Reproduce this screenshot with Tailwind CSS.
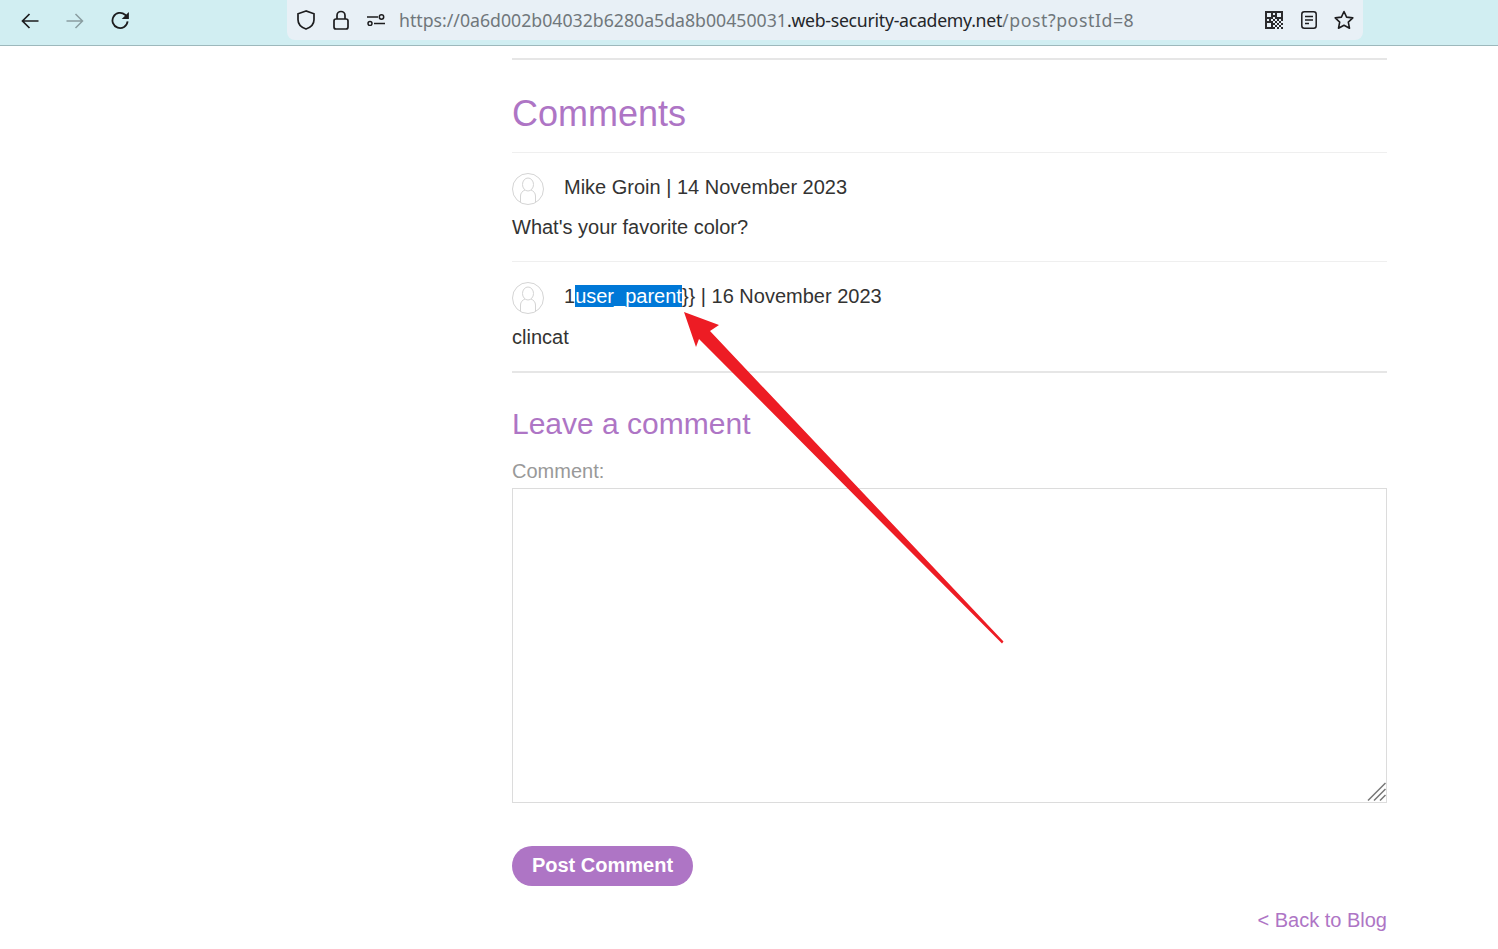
<!DOCTYPE html>
<html lang="en">
<head>
    <meta charset="UTF-8">
    <title>Comments</title>
    <script src="https://cdn.jsdelivr.net/npm/@tailwindcss/browser@4"></script>
</head>
<body class="relative h-[949px] overflow-hidden bg-white font-['Liberation_Sans',Arial,sans-serif] text-[20px] text-[#333332]">
    <!-- Browser toolbar -->
    <header class="flex h-[46px] border-b border-[#9db8bc] bg-[#d1eef2]">
        <div class="flex h-[41px] w-[287px] items-center gap-[27px] pl-[21px]">
            <svg class="h-[18px] w-[18px]" viewBox="0 0 18 18" fill="none" stroke="#1c1c1e" stroke-width="1.7"><path d="M17.5 9H1.5M8.5 2 1.5 9l7 7"/></svg>
            <svg class="h-[18px] w-[18px]" viewBox="0 0 18 18" fill="none" stroke="#8a9da1" stroke-width="1.5"><path d="M.5 9h16M9.5 2l7 7-7 7"/></svg>
            <svg class="h-[19px] w-[19px]" viewBox="0 0 20 20" fill="none" stroke="#1c1c1e" stroke-width="1.9"><path d="M17.500 11A8 8 0 1 1 14.800 3.900L17 6.500"/><path d="M18.800 1v7.500h-7.500z" fill="#1c1c1e" stroke="none"/></svg>
        </div>
        <div class="flex h-[40px] w-[1076px] items-center rounded-b-lg bg-[#e8f0f6] pl-[10px]">
            <svg class="h-[20px] w-[18px]" viewBox="0 0 18 20" fill="none" stroke="#1c1c1e" stroke-width="1.7"><path d="M9 1 1 3.8v6c0 4.2 3.2 7.6 8 9.2 4.800-1.600 8-5 8-9.200v-6z"/></svg>
            <svg class="ml-[18px] h-[20px] w-[16px]" viewBox="0 0 16 20" fill="none" stroke="#1c1c1e" stroke-width="1.700"><path d="M4 9V5.500a4 4 0 0 1 8 0V9"/><rect x="1" y="9" width="14" height="10" rx="2"/></svg>
            <svg class="ml-[18px] h-[12px] w-[18px]" viewBox="0 0 18 12" fill="none" stroke="#1c1c1e" stroke-width="1.500"><path d="M0 3h11M7 9.500h11"/><circle cx="14.500" cy="3" r="2.200"/><circle cx="3" cy="9.500" r="2"/></svg>
            <div class="mt-[1px] ml-[14px] font-['Noto_Sans',sans-serif] text-[17.7px] whitespace-nowrap text-[#70777b]">https://0a6d002b04032b6280a5da8b00450031<span class="tracking-[-0.28px] text-[#24262a]">.web-security-academy.net</span><span class="tracking-[0.57px]">/post?postId=8</span></div>
            <div class="ml-auto flex items-center pr-[9px]">
                <svg class="h-[18px] w-[18px]" viewBox="0 0 18 18" fill="#2b2b2d"><path fill-rule="evenodd" d="M0 0h8v8H0zM2 2v4h4V2zM10 0h8v8h-8zM12 2v4h4V2zM0 10h8v8H0zM2 12v4h4v-4z"/><path d="M8 0h2v2H8zM8 4h2v2H8zM8 8h2v2H8zM8 12h2v2H8zM8 16h2v2H8zM0 8h2v2H0zM4 8h2v2H4zM12 8h2v2h-2zM16 8h2v2h-2zM10 10h2v2h-2zM14 10h2v2h-2zM12 12h2v2h-2zM16 12h2v2h-2zM10 14h2v2h-2zM14 14h2v2h-2zM12 16h2v2h-2zM16 16h2v2h-2z"/></svg>
                <svg class="ml-[18px] h-[18px] w-[16px]" viewBox="0 0 16 18" fill="none" stroke="#1c1c1e" stroke-width="1.500"><rect x=".8" y=".8" width="14.400" height="16.400" rx="2.500"/><path d="M4 5.500h8M4 9h8M4 12.500h4"/></svg>
                <svg class="ml-[17px] h-[20px] w-[20px]" viewBox="0 0 20 20" fill="none" stroke="#1c1c1e" stroke-width="1.600" stroke-linejoin="round"><path d="m10 1.500 2.600 5.600 6.200.8-4.500 4.200 1.200 6.100L10 15.200l-5.500 3 1.200-6.100L1.200 7.900l6.200-.8z"/></svg>
            </div>
        </div>
    </header>

    <main class="ml-[512px] w-[875px]">
        <hr class="mt-[12px] border-t-2 border-[#e6e6e6]">
        <h1 class="mt-[34px] mb-[18px] text-[36px] leading-[40px] text-[#ae75c5]">Comments</h1>

        <section class="border-t border-[#efefef] pt-[20px] pb-[22px]">
            <div class="flex gap-[20px]">
                <svg class="h-[32px] w-[32px]" viewBox="0 0 32 32" fill="none" stroke="#d4d4d4"><circle cx="16" cy="16" r="15.500"/><ellipse cx="16" cy="11.500" rx="5.500" ry="6.500"/><path d="M8.500 29.500V23c0-3 2-5 4.500-6M23.500 29.500V23c0-3-2-5-4.500-6"/></svg>
                <p class="pt-[3px] leading-[23px]">Mike Groin | 14 November 2023</p>
            </div>
            <p class="mt-[11px] leading-[23px]">What's your favorite color?</p>
        </section>

        <section class="border-t border-[#efefef] pt-[20px] pb-[22px]">
            <div class="flex gap-[20px]">
                <svg class="h-[32px] w-[32px]" viewBox="0 0 32 32" fill="none" stroke="#d4d4d4"><circle cx="16" cy="16" r="15.500"/><ellipse cx="16" cy="11.500" rx="5.500" ry="6.500"/><path d="M8.500 29.500V23c0-3 2-5 4.500-6M23.500 29.500V23c0-3-2-5-4.500-6"/></svg>
                <p class="leading-[28px]">1<span class="bg-[#0078d7] text-white">user_parent</span>}} | 16 November 2023</p>
            </div>
            <p class="mt-[12px] leading-[23px]">clincat</p>
        </section>

        <hr class="border-t-2 border-[#e6e6e6]">
        <h2 class="mt-[33px] text-[30px] leading-[36px] text-[#ae75c5]">Leave a comment</h2>
        <label class="mt-[18px] block leading-[23px] text-[#999999]">Comment:</label>
        <div class="relative mt-[5px]">
            <textarea class="block h-[315px] w-[875px] resize-none border border-[#dcdcdc] bg-white"></textarea>
            <!-- Resize grip -->
            <svg class="absolute right-[1px] bottom-[2px] h-[19px] w-[19px]" viewBox="0 0 19 19" fill="none" stroke="#777777" stroke-width="1.500"><path d="M1 18.500 18.500 1M7 18.500 18.500 7M13 18.500 18.500 13"/></svg>
        </div>
        <button class="mt-[43px] block h-[40px] w-[181px] rounded-[20px] bg-[#ae75c5] pb-[2px] text-[20px] font-bold text-white">Post Comment</button>
        <div class="mt-[23px] text-right leading-[23px]"><a class="text-[#ae75c5]" href="#">&lt; Back to Blog</a></div>
    </main>

    <!-- Annotation arrow drawn over the page -->
    <svg class="pointer-events-none absolute top-0 left-0 h-[949px] w-[1498px]" viewBox="0 0 1498 949"><polygon points="684,312 719,325 710,331 1003.500,641.500 1002,643.500 699,339 696,347" fill="#ed1c24"/></svg>
</body>
</html>
